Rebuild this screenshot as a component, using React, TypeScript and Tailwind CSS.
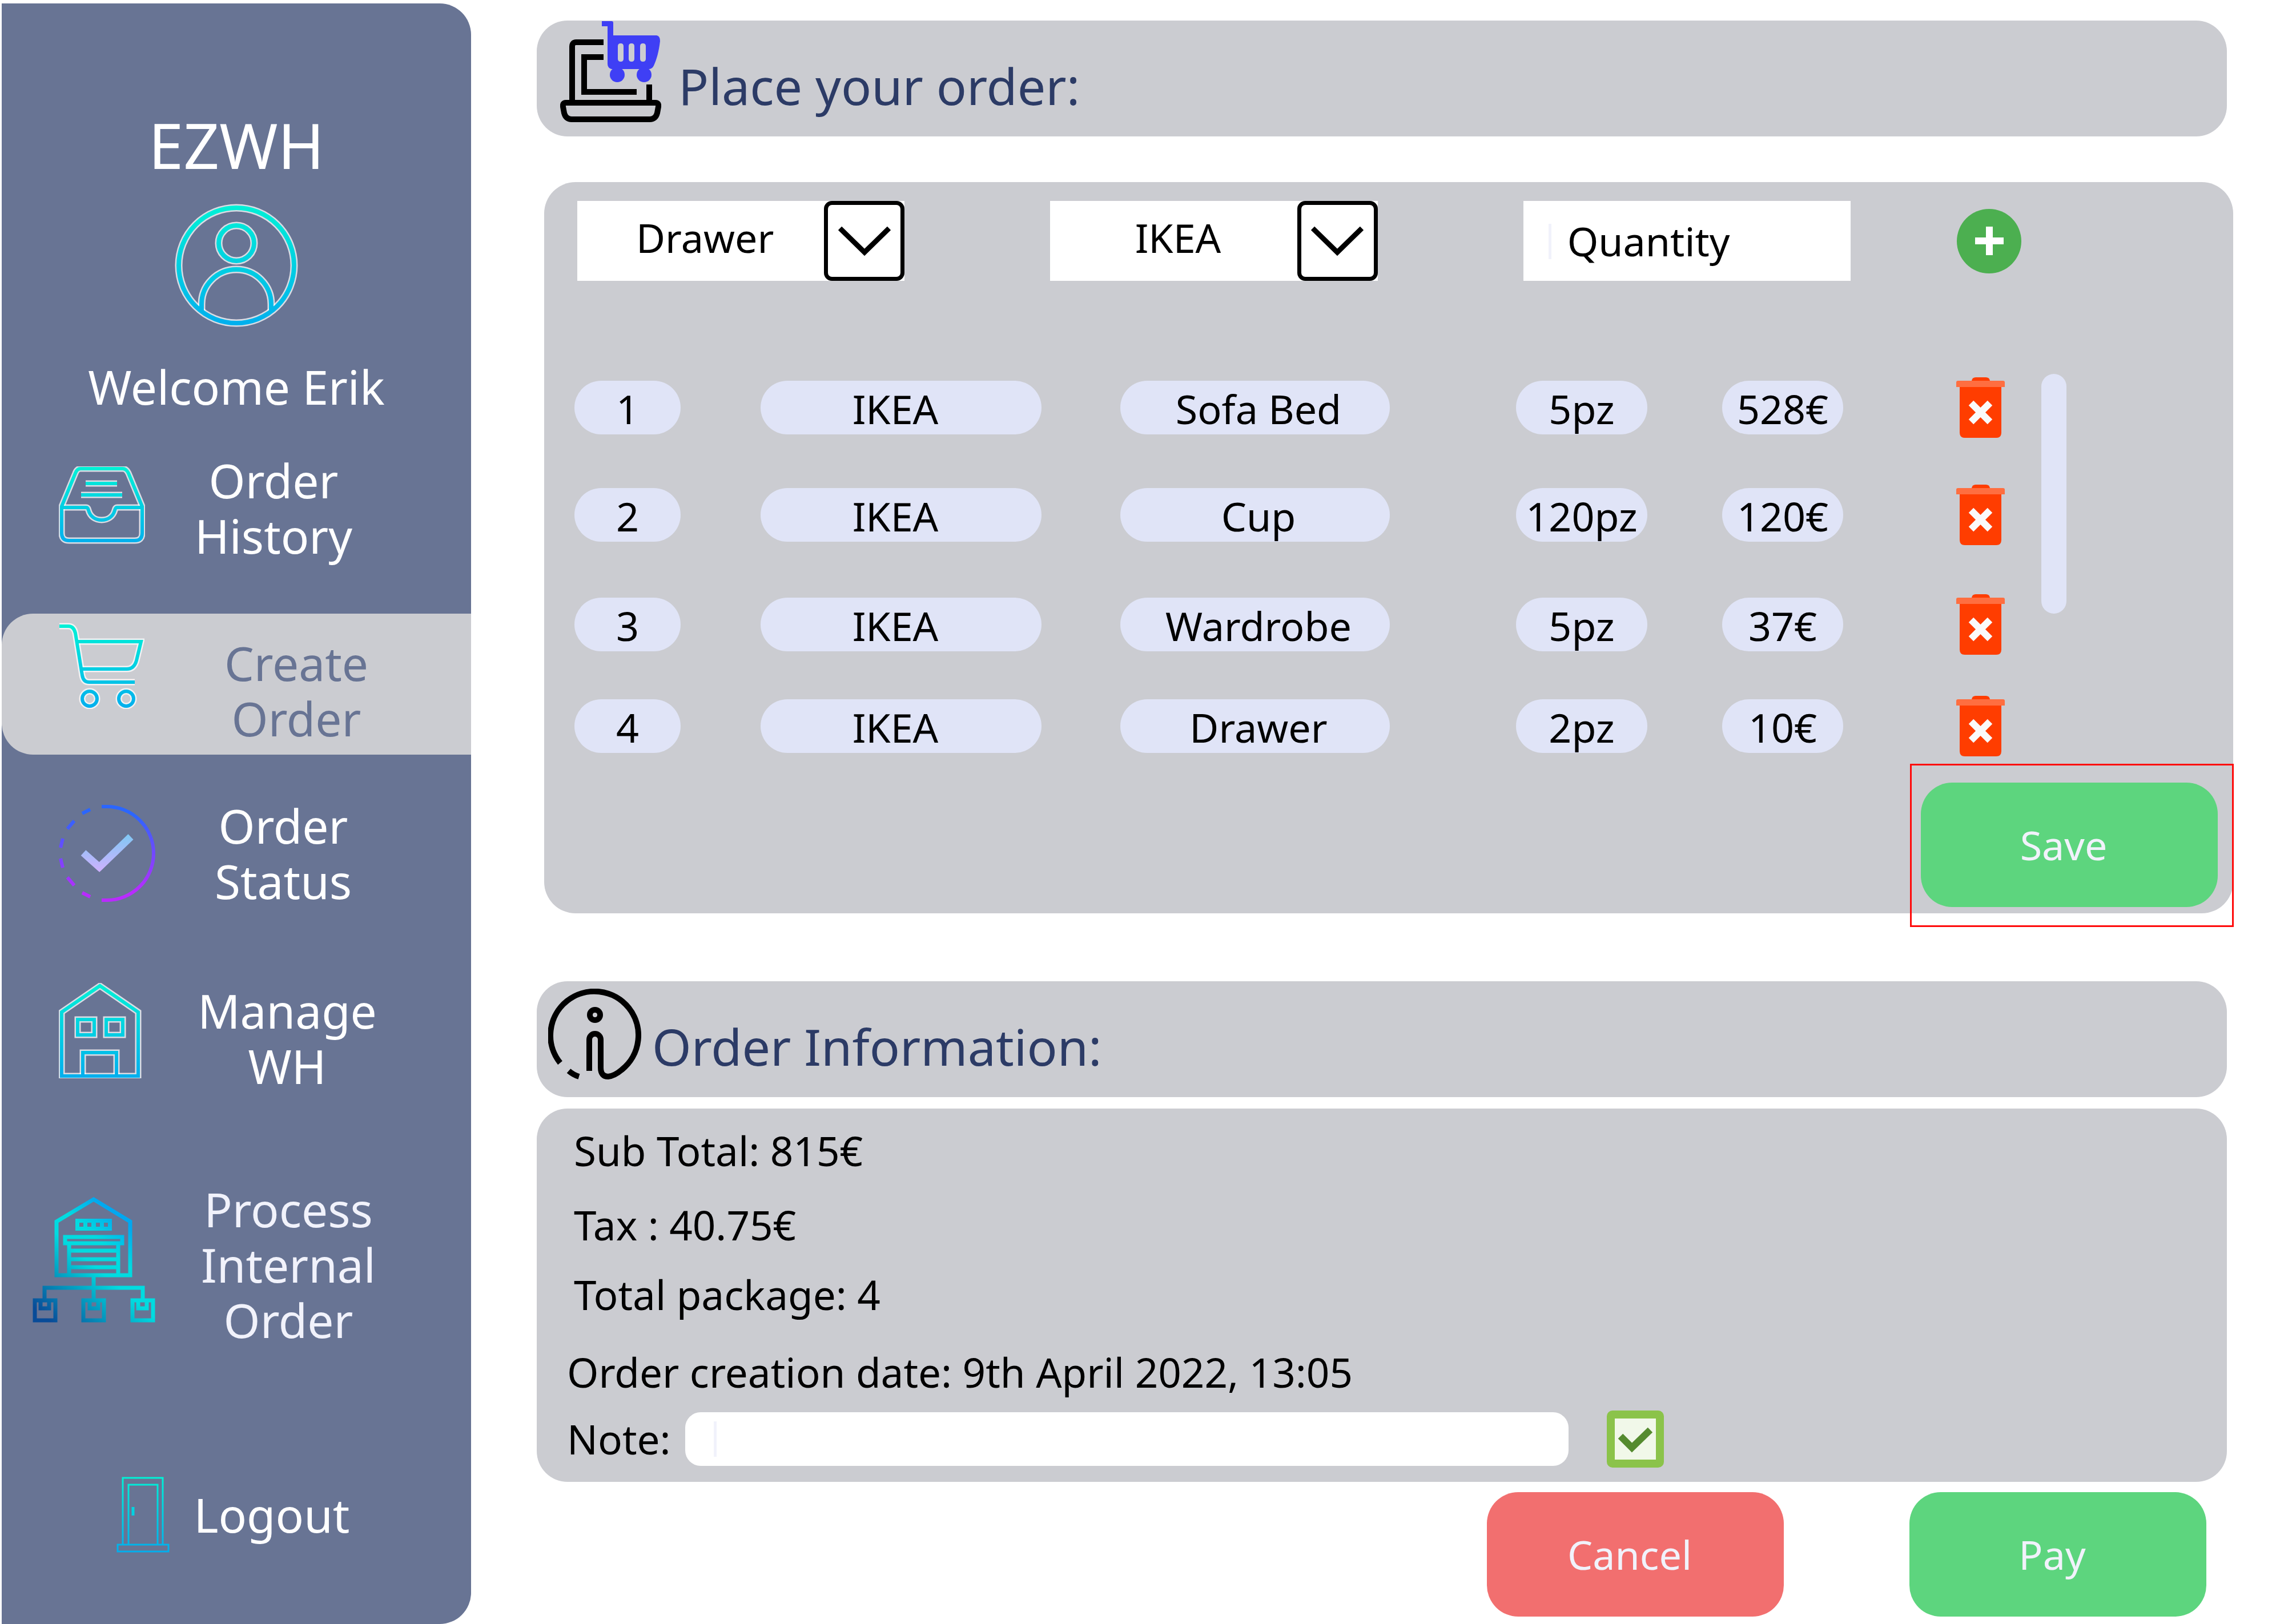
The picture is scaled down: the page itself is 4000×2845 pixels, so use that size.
import { useState, type ReactNode } from "react";

/* ---------- icons ---------- */

function Teal({ id, height }: { id: string; height: number }) {
  return (
    <defs>
      <linearGradient id={id} gradientUnits="userSpaceOnUse" x1="0" y1="0" x2="0" y2={height}>
        <stop offset="0" stopColor="#00f2d6" />
        <stop offset="1" stopColor="#00aeee" />
      </linearGradient>
    </defs>
  );
}

/* Gradient line art with a thin white edge on both sides of each stroke. */
function Outlined({ id, width, children }: { id: string; width: number; children: ReactNode }) {
  return (
    <g fill="none">
      <g stroke="#ffffff" strokeOpacity="0.75" strokeWidth={width + 5}>
        {children}
      </g>
      <g stroke={`url(#${id})`} strokeWidth={width}>
        {children}
      </g>
    </g>
  );
}

function AvatarIcon() {
  return (
    <svg width="216" height="216" viewBox="0 0 216 216" aria-hidden="true">
      <Teal id="avatar" height={216} />
      <Outlined id="avatar" width={8}>
        <circle cx="108" cy="108" r="101" />
        <circle cx="108" cy="69" r="31" />
        <path d="M47 188V176A61 61 0 0 1 169 176V188" />
      </Outlined>
    </svg>
  );
}

function HistoryIcon() {
  return (
    <svg width="151" height="136" viewBox="0 0 151 136" aria-hidden="true">
      <Teal id="history" height={136} />
      <Outlined id="history" width={6}>
        <path d="M5 70V117Q5 130 18 130H133Q146 130 146 117V70L122 12Q118 4 112 4H38Q32 4 29 12Z" />
        <path d="M5 72H48C51 72 51 74 52 77C55 88 64 94 75 94S95 88 98 77C99 74 99 72 102 72H146" />
        <path d="M47 30H102M39 50H111" />
      </Outlined>
    </svg>
  );
}

function CartIcon() {
  return (
    <svg width="150" height="151" viewBox="0 0 150 151" aria-hidden="true">
      <Teal id="cart" height={151} />
      <Outlined id="cart" width={6}>
        <path d="M1 6H17Q26 6 29 18L41 92Q43 104 53 104H133" />
        <path d="M32 33H144L136 66Q132 81 119 81H39" />
        <circle cx="54" cy="133" r="13" />
        <circle cx="118" cy="133" r="13" />
      </Outlined>
    </svg>
  );
}

function StatusIcon() {
  return (
    <svg width="170" height="170" viewBox="0 0 170 170" fill="none" aria-hidden="true">
      <defs>
        <linearGradient id="ring" gradientUnits="userSpaceOnUse" x1="0" y1="0" x2="0" y2="170">
          <stop offset="0.1" stopColor="#2b66ff" />
          <stop offset="0.9" stopColor="#b92bff" />
        </linearGradient>
        <linearGradient id="tick" gradientUnits="userSpaceOnUse" x1="0" y1="52" x2="0" y2="118">
          <stop offset="0" stopColor="#80c8f4" />
          <stop offset="1" stopColor="#d0b0ff" />
        </linearGradient>
      </defs>
      <path
        d="M75 3H84A82 82 0 0 1 84 167H75M41 15L55 8M15 42L27 28M3 75L7 59M3 94L7 110M15 127L27 141M41 154L55 161"
        stroke="url(#ring)"
        strokeWidth="6"
      />
      <path d="M43 84L71 109L126 56" stroke="url(#tick)" strokeWidth="13" />
    </svg>
  );
}

function WarehouseIcon() {
  return (
    <svg width="145" height="167" viewBox="0 0 145 167" aria-hidden="true">
      <Teal id="warehouse" height={167} />
      <Outlined id="warehouse" width={6}>
        <path d="M5 51L72 5L139 51V163H5Z" />
        <path d="M33 64H62V91H33ZM83 64H112V91H83Z" />
        <path d="M42 163V122H101V163" />
      </Outlined>
    </svg>
  );
}

function ProcessIcon() {
  return (
    <svg width="215" height="221" viewBox="0 0 215 221" fill="none" aria-hidden="true">
      <defs>
        <linearGradient id="process" gradientUnits="userSpaceOnUse" x1="0" y1="220" x2="171" y2="20">
          <stop offset="0.08" stopColor="#084b98" />
          <stop offset="0.55" stopColor="#00dbe0" />
          <stop offset="0.7" stopColor="#00dbe0" />
          <stop offset="0.9" stopColor="#00a8f0" />
        </linearGradient>
      </defs>
      <g stroke="url(#process)" strokeWidth="7">
        <path d="M42 44L107 5L171 44V138H42Z" />
        <path d="M57 71H157V82H57Z" />
        <path d="M64 82V138M150 82V138M64 95H150M64 110H150M64 124H150" />
        <path d="M107 138V182M21 182V160H193V182" />
        <path d="M4 182H40V217H4ZM89 182H125V217H89ZM175 182H211V217H175Z" />
        <path d="M14 182V196H29V182M100 182V196H115V182M185 182V196H200V182" />
      </g>
      <path
        fill="url(#process)"
        fillRule="evenodd"
        d="M75 39H139V60H75ZM82 46V53H89V46ZM96 46V53H103V46ZM111 46V53H118V46ZM125 46V53H132V46Z"
      />
    </svg>
  );
}

function DoorIcon() {
  return (
    <svg width="93" height="133" viewBox="0 0 93 133" fill="none" aria-hidden="true">
      <Teal id="door" height={133} />
      <g stroke="url(#door)" strokeWidth="3">
        <path d="M11 119V2H81V119M21 119V14H72V119M2 119H91V131H2Z" />
        <path d="M29 53V68" strokeWidth="5" />
      </g>
    </svg>
  );
}

function LaptopCartIcon() {
  return (
    <svg width="177" height="179" viewBox="0 0 177 179" fill="none" aria-hidden="true">
      <g stroke="#000000" strokeWidth="10">
        <path d="M76 38H28Q21 38 21 46V144M76 64H42V125H134M156 112V144" />
        <path d="M10 144H167Q173 144 172 151L170 162Q167 173 157 173H20Q10 173 7 162L5 151Q4 144 10 144Z" />
      </g>
      <path
        fill="#3f3ff5"
        fillRule="evenodd"
        d="M73 1H90Q93 1 93 4V26H169Q175 27 175 36C173 54 169 68 164 79Q161 85 155 85H90Q83 83 83 76V10H73ZM106 40Q101 40 101 45V67Q101 72 106 72T111 67V45Q111 40 106 40ZM125 40Q120 40 120 45V67Q120 72 125 72T130 67V45Q130 40 125 40ZM145 40Q140 40 140 45V67Q140 72 145 72T150 67V45Q150 40 145 40Z"
      />
      <circle cx="100" cy="95" r="13" fill="#3f3ff5" />
      <circle cx="147" cy="95" r="13" fill="#3f3ff5" />
    </svg>
  );
}

function InfoIcon() {
  return (
    <svg width="164" height="164" viewBox="0 0 164 164" fill="none" stroke="#000000" strokeWidth="10" aria-hidden="true">
      <path d="M21 130A77 77 0 1 1 129 142Q116 153 105 154Q92 154 92 138V89A10 10 0 0 0 72 89V144" />
      <path d="M36 144Q44 151 54 154" />
      <circle cx="82" cy="46" r="9" />
    </svg>
  );
}

function TrashIcon() {
  return (
    <svg width="86" height="106" viewBox="0 0 86 106" aria-hidden="true">
      <path d="M27 6Q28 0 34 0H52Q58 0 59 6V10H27Z" fill="#ff3d00" />
      <path d="M6 14H79V97Q79 106 70 106H15Q6 106 6 97Z" fill="#ff3d00" />
      <path d="M0 9Q0 6 3 6H82Q85 6 85 9V17H0Z" fill="#ff6e40" />
      <path d="M26 45L59 78M59 45L26 78" stroke="#fafafa" strokeWidth="12" />
    </svg>
  );
}

/* ---------- sidebar ---------- */

type NavItemProps = {
  icon: ReactNode;
  label: string;
  className: string;
  iconClass: string;
  labelClass: string;
};

function NavItem({ icon, label, className, iconClass, labelClass }: NavItemProps) {
  return (
    <a href="#" className={`flex items-start text-[82px] leading-[97px] ${className}`}>
      <span className={`shrink-0 ${iconClass}`}>{icon}</span>
      <span className={`whitespace-pre-line text-center ${labelClass}`}>{label}</span>
    </a>
  );
}

function Sidebar() {
  return (
    <aside className="ml-[3px] mt-[6px] flex w-[822px] shrink-0 flex-col rounded-r-[55px] bg-[#687494] text-white">
      <div className="flex flex-col items-center pt-[187px]">
        <h1 className="text-[110px] leading-[120px]">EZWH</h1>
        <div className="mt-[44px]">
          <AvatarIcon />
        </div>
        <p className="mt-[56px] text-[82px] leading-[97px]">Welcome Erik</p>
      </div>
      <nav className="flex flex-col">
        <NavItem
          className="mt-[67px] pl-[100px]"
          iconClass="w-[151px] pt-6"
          labelClass="w-[450px]"
          icon={<HistoryIcon />}
          label={"Order\nHistory"}
        />
        <NavItem
          className="mt-[88px] h-[247px] rounded-l-[55px] bg-[#cbccd1] pl-[100px] pt-4 text-[#687494]"
          iconClass="w-[151px]"
          labelClass="w-[530px] pt-[22px]"
          icon={<CartIcon />}
          label={"Create\nOrder"}
        />
        <NavItem
          className="mt-[76px] pl-[100px]"
          iconClass="w-[170px] pt-3"
          labelClass="w-[446px]"
          icon={<StatusIcon />}
          label={"Order\nStatus"}
        />
        <NavItem
          className="mt-[130px] pl-[100px]"
          iconClass="w-[151px]"
          labelClass="w-[498px]"
          icon={<WarehouseIcon />}
          label={"Manage\nWH"}
        />
        <NavItem
          className="mt-[154px] pl-[54px] text-[#f1f2fb]"
          iconClass="w-[215px] pt-[26px]"
          labelClass="w-[466px]"
          icon={<ProcessIcon />}
          label={"Process\nInternal\nOrder"}
        />
        <NavItem
          className="mt-[226px] pl-[201px]"
          iconClass="w-[93px]"
          labelClass="w-[358px] pt-[18px]"
          icon={<DoorIcon />}
          label="Logout"
        />
      </nav>
    </aside>
  );
}

/* ---------- order form ---------- */

function SectionTitle({ icon, children, className }: { icon: ReactNode; children: ReactNode; className: string }) {
  return (
    <header className={`flex h-[203px] items-start rounded-[54px] bg-[#cbccd1] ${className}`}>
      {icon}
      <h2 className="self-center pt-6 text-[88px] leading-[120px] text-[#2c3b66]">{children}</h2>
    </header>
  );
}

function Picker({ label, options }: { label: string; options: string[] }) {
  return (
    <div className="relative flex-1">
      <select
        aria-label={label}
        defaultValue={options[0]}
        className="h-[140px] w-full appearance-none bg-white pb-3 pr-[126px] text-center text-black [text-align-last:center]"
      >
        {options.map((option) => (
          <option key={option}>{option}</option>
        ))}
      </select>
      <span className="pointer-events-none absolute right-0 top-0 flex h-[140px] w-[141px] items-center justify-center rounded-[14px] border-[7px] border-black bg-white">
        <svg width="92" height="56" viewBox="0 0 92 56" fill="none" aria-hidden="true">
          <path d="M3 6L46 48L89 6" stroke="#000000" strokeWidth="9" />
        </svg>
      </span>
    </div>
  );
}

const ROWS = [
  { id: 1, supplier: "IKEA", product: "Sofa Bed", quantity: "5pz", price: "528€", height: "h-[188px]" },
  { id: 2, supplier: "IKEA", product: "Cup", quantity: "120pz", price: "120€", height: "h-[192px]" },
  { id: 3, supplier: "IKEA", product: "Wardrobe", quantity: "5pz", price: "37€", height: "h-[178px]" },
  { id: 4, supplier: "IKEA", product: "Drawer", quantity: "2pz", price: "10€", height: "h-[112px]" },
];

function Pill({ className, children }: { className: string; children: ReactNode }) {
  return (
    <td className="p-0 pt-3 align-top">
      <span className={`block h-[94px] whitespace-nowrap rounded-[47px] bg-[#e0e4f7] text-center leading-[98px] ${className}`}>
        {children}
      </span>
    </td>
  );
}

function OrderTable() {
  return (
    <table className="flex-1 table-fixed border-collapse">
      <colgroup>
        <col className="w-[326px]" />
        <col className="w-[630px]" />
        <col className="w-[693px]" />
        <col className="w-[361px]" />
        <col className="w-[410px]" />
        <col className="w-[86px]" />
      </colgroup>
      <tbody>
        {ROWS.map((row) => (
          <tr key={row.id} className={row.height}>
            <Pill className="w-[186px]">{row.id}</Pill>
            <Pill className="w-[492px] pr-5">{row.supplier}</Pill>
            <Pill className="w-[472px] pl-3">{row.product}</Pill>
            <Pill className="w-[230px]">{row.quantity}</Pill>
            <Pill className="w-[212px]">{row.price}</Pill>
            <td className="p-0 pt-[6px] align-top">
              <button type="button" aria-label={`Remove ${row.product}`} className="block">
                <TrashIcon />
              </button>
            </td>
          </tr>
        ))}
      </tbody>
    </table>
  );
}

function ActionButton({ className, children }: { className: string; children: ReactNode }) {
  return (
    <button type="button" className={`h-[218px] w-[520px] rounded-[55px] pr-5 text-[#f1f2fb] ${className}`}>
      {children}
    </button>
  );
}

export default function App() {
  const [confirmed, setConfirmed] = useState(true);

  return (
    <div className="flex min-h-screen bg-white font-['Noto_Sans',sans-serif] text-[70px] leading-[94px] text-black">
      <Sidebar />
      <main className="flex min-w-0 flex-1 flex-col pl-[115px] pr-[100px] pt-[36px]">
        <SectionTitle icon={<LaptopCartIcon />} className="gap-[30px] pl-[41px]">
          Place your order:
        </SectionTitle>

        <section className="-mr-[11px] ml-[13px] mt-[80px] rounded-[55px] bg-[#cbccd1] pt-[33px]">
          <div className="flex items-center gap-[186px] pl-[58px] pr-[371px]">
            <div className="flex flex-1 gap-[255px]">
              <Picker label="Product" options={["Drawer", "Sofa Bed", "Cup", "Wardrobe"]} />
              <Picker label="Supplier" options={["IKEA"]} />
              <div className="relative flex-1">
                <input
                  aria-label="Quantity"
                  placeholder="Quantity"
                  className="h-[140px] w-full bg-white pl-[77px] text-black placeholder:text-black placeholder:opacity-100"
                />
                <span className="absolute left-[44px] top-[40px] h-[62px] w-[5px] bg-[#f1f2fb]" />
              </div>
            </div>
            <button
              type="button"
              aria-label="Add item"
              className="flex size-[113px] shrink-0 items-center justify-center rounded-full bg-[#4caf50]"
            >
              <svg width="50" height="50" viewBox="0 0 50 50" stroke="#ffffff" strokeWidth="12" aria-hidden="true">
                <path d="M25 0V50M0 25H50" />
              </svg>
            </button>
          </div>

          <div className="mt-[163px] flex items-start gap-[63px] pl-[53px] pr-[292px]">
            <OrderTable />
            <span className="h-[420px] w-[44px] shrink-0 rounded-full bg-[#e0e4f7]" />
          </div>

          <div className="mt-[46px] flex justify-end pb-[11px] pr-[27px]">
            <div className="relative flex">
              <ActionButton className="bg-[#5dd57e]">Save</ActionButton>
              <span className="pointer-events-none absolute -bottom-[35px] -left-[19px] -right-[28px] -top-[33px] border-[3px] border-[#ff0a0a]" />
            </div>
          </div>
        </section>

        <SectionTitle icon={<span className="pt-[13px]"><InfoIcon /></span>} className="mt-[119px] gap-[18px] pl-[20px]">
          Order Information:
        </SectionTitle>

        <section className="mt-5 rounded-[54px] bg-[#cbccd1] pb-[25px] pl-[53px] pt-[27px] text-[71px]">
          <p className="pl-3">Sub Total: 815€</p>
          <p className="mt-9 pl-3">Tax : 40.75€</p>
          <p className="mt-7 pl-3">Total package: 4</p>
          <p className="mt-[42px]">Order creation date: 9th April 2022, 13:05</p>
          <div className="mt-5 flex items-center pr-[986px]">
            <label htmlFor="note" className="w-[207px] shrink-0">
              Note:
            </label>
            <div className="relative flex flex-1">
              <input id="note" className="h-[94px] w-full rounded-[27px] bg-white px-[60px]" />
              <span className="absolute left-[50px] top-4 h-[62px] w-[5px] bg-[#f1f2fb]" />
            </div>
            <label className="relative ml-[67px] block size-[100px] shrink-0">
              <input
                type="checkbox"
                aria-label="Confirm note"
                checked={confirmed}
                onChange={(event) => setConfirmed(event.target.checked)}
                className="block size-[100px] appearance-none rounded-[10px] border-[14px] border-[#8bc34a] bg-[#f1f8e9]"
              />
              {confirmed && (
                <svg
                  className="pointer-events-none absolute left-0 top-0"
                  width="100"
                  height="100"
                  viewBox="0 0 100 100"
                  fill="none"
                  aria-hidden="true"
                >
                  <path d="M24 45L44 65L76 34" stroke="#558b2f" strokeWidth="12" />
                </svg>
              )}
            </label>
          </div>
        </section>

        <div className="mt-[18px] flex justify-end gap-[220px] pb-2 pr-9">
          <ActionButton className="bg-[#f26f6f]">Cancel</ActionButton>
          <ActionButton className="bg-[#5dd57e]">Pay</ActionButton>
        </div>
      </main>
    </div>
  );
}
